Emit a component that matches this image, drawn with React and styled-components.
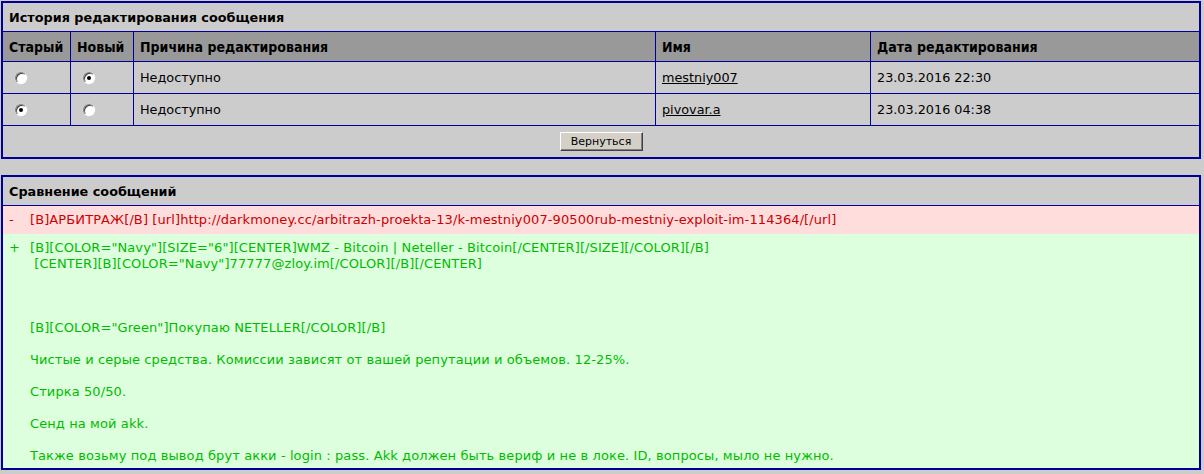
import React from "react";
import styled, { createGlobalStyle } from "styled-components";

const GlobalStyle = createGlobalStyle`
  html, body {
    margin: 0;
    padding: 0;
    background: #cccccc;
  }
  body {
    font-family: "DejaVu Sans", Verdana, sans-serif;
    font-size: 12.8px;
    color: #000;
  }
`;

const navy = "#000099";

const Page = styled.div`
  display: flex;
  flex-direction: column;
  gap: 16px;
  padding: 1px 3px 3px 1px;
`;

const Box = styled.div`
  width: 1200px;
  box-sizing: border-box;
  border: 2px solid ${navy};
  background: #cccccc;
`;

const BoxTitle = styled.div`
  height: 29px;
  box-sizing: border-box;
  border-bottom: 1px solid ${navy};
  padding: 0 6px;
  display: flex;
  align-items: center;
  font-family: "DejaVu Sans", Verdana, sans-serif;
  font-weight: bold;
  font-size: 12.8px;
`;

const Grid = styled.div`
  display: grid;
  grid-template-columns: 68px 63px 522px 215px 1fr;
`;

const Cell = styled.div`
  box-sizing: border-box;
  height: ${(p) => (p.$head ? 30 : 32)}px;
  border-bottom: 1px solid ${navy};
  border-right: ${(p) => (p.$last ? "none" : `1px solid ${navy}`)};
  background: ${(p) => (p.$head ? "#999999" : "#cccccc")};
  display: flex;
  align-items: center;
  padding-left: ${(p) => (p.$radio ? 12 : 6)}px;
  font-family: ${(p) =>
    p.$head
      ? `"DejaVu Sans Condensed", Tahoma, sans-serif`
      : `"DejaVu Sans", Verdana, sans-serif`};
  font-weight: ${(p) => (p.$head ? "bold" : "normal")};
  font-size: ${(p) => (p.$head ? 14 : 12.8)}px;
`;

const Radio = styled.span`
  display: inline-block;
  position: relative;
  width: 12px;
  height: 12px;
  box-sizing: border-box;
  border-radius: 50%;
  background: #fff;
  border: 1px solid;
  border-color: #808080 #ffffff #ffffff #808080;
  box-shadow: inset 1px 1px 0 #404040, 0 0 0 0.5px #dcdcdc;
  &::after {
    content: "";
    display: ${(p) => (p.$checked ? "block" : "none")};
    position: absolute;
    left: 3px;
    top: 3px;
    width: 4px;
    height: 4px;
    border-radius: 50%;
    background: #000;
  }
`;

const UserLink = styled.a`
  color: #000;
  text-decoration: underline;
  cursor: pointer;
`;

const Actions = styled.div`
  height: 31px;
  display: flex;
  align-items: center;
  justify-content: center;
`;

const Button = styled.button`
  width: 83px;
  height: 19px;
  padding: 0;
  background: #d4d0c8;
  border: 1px solid;
  border-color: #ffffff #404040 #404040 #ffffff;
  box-shadow: inset -1px -1px 0 #808080;
  font-family: "DejaVu Sans", Tahoma, sans-serif;
  font-size: 11px;
  color: #000;
`;

const DiffRow = styled.div`
  display: grid;
  grid-template-columns: 21px 1fr;
  padding: ${(p) => (p.$added ? "6px 6px 4px 6px" : "6px")};
  background: ${(p) => (p.$added ? "#ddffdd" : "#ffdddd")};
  color: ${(p) => (p.$added ? "#00bb00" : "#cc0000")};
  font-family: "DejaVu Sans", Verdana, sans-serif;
  font-size: 13px;
  letter-spacing: 0.1px;
  line-height: 16px;
`;

const DiffText = styled.div`
  white-space: pre-wrap;
`;

const rows = [
  { old: false, cur: true, reason: "Недоступно", user: "mestniy007", date: "23.03.2016 22:30" },
  { old: true, cur: false, reason: "Недоступно", user: "pivovar.a", date: "23.03.2016 04:38" },
];

const removed =
  "[B]АРБИТРАЖ[/B] [url]http://darkmoney.cc/arbitrazh-proekta-13/k-mestniy007-90500rub-mestniy-exploit-im-114364/[/url]";

const added = [
  '[B][COLOR="Navy"][SIZE="6"][CENTER]WMZ - Bitcoin | Neteller - Bitcoin[/CENTER][/SIZE][/COLOR][/B]',
  ' [CENTER][B][COLOR="Navy"]77777@zloy.im[/COLOR][/B][/CENTER]',
  "",
  "",
  "",
  '[B][COLOR="Green"]Покупаю NETELLER[/COLOR][/B]',
  "",
  "Чистые и серые средства. Комиссии зависят от вашей репутации и объемов. 12-25%.",
  "",
  "Стирка 50/50.",
  "",
  "Сенд на мой akk.",
  "",
  "Также возьму под вывод брут акки - login : pass. Akk должен быть вериф и не в локе. ID, вопросы, мыло не нужно.",
].join("\n");

export default function App() {
  return (
    <>
      <GlobalStyle />
      <Page>
        <Box>
          <BoxTitle>История редактирования сообщения</BoxTitle>
          <Grid>
            <Cell $head>Старый</Cell>
            <Cell $head>Новый</Cell>
            <Cell $head>Причина редактирования</Cell>
            <Cell $head>Имя</Cell>
            <Cell $head $last>Дата редактирования</Cell>
            {rows.map((r, i) => (
              <React.Fragment key={i}>
                <Cell $radio>
                  <Radio $checked={r.old} />
                </Cell>
                <Cell $radio>
                  <Radio $checked={r.cur} />
                </Cell>
                <Cell>{r.reason}</Cell>
                <Cell>
                  <UserLink>{r.user}</UserLink>
                </Cell>
                <Cell $last>{r.date}</Cell>
              </React.Fragment>
            ))}
          </Grid>
          <Actions>
            <Button>Вернуться</Button>
          </Actions>
        </Box>
        <Box>
          <BoxTitle>Сравнение сообщений</BoxTitle>
          <DiffRow>
            <span>-</span>
            <DiffText>{removed}</DiffText>
          </DiffRow>
          <DiffRow $added>
            <span>+</span>
            <DiffText>{added}</DiffText>
          </DiffRow>
        </Box>
      </Page>
    </>
  );
}
